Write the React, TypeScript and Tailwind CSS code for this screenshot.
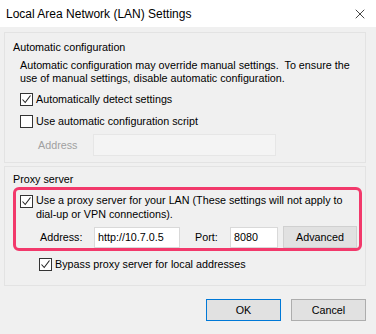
import { X } from 'lucide-react';

function Check({ checked }: { checked?: boolean }) {
  return (
    <span className="w-[13px] h-[13px] border border-[#333] bg-white flex items-center justify-center shrink-0">
      {checked && (
        <svg width="11" height="11" viewBox="0 0 11 11" fill="none">
          <path d="M1.5 5.5 L4.2 8.5 L9.5 1.5" stroke="#222" strokeWidth="1.1" />
        </svg>
      )}
    </span>
  );
}

export default function App() {
  return (
    <div className="w-[376px] h-[334px] bg-[#f0f0f0] text-[10.75px] text-black font-['Liberation_Sans',Arial,sans-serif] leading-[14px] whitespace-nowrap overflow-hidden">
      <div className="h-[27px] bg-white flex items-center justify-between pl-[6px] pr-[8px]">
        <span className="text-[12px]">Local Area Network (LAN) Settings</span>
        <X className="w-[16px] h-[16px]" strokeWidth={1.1} />
      </div>

      <div className="px-[4px] pt-[5px]">
        <div className="border border-[#e3e3e3] w-[362px] h-[131px] pl-[8px] pt-[7px]">
          <p>Automatic configuration</p>
          <div className="pl-[7px] pt-[5px]">
            <p className="leading-[13px]">
              Automatic configuration may override manual settings.&nbsp; To ensure the
              <br />
              use of manual settings, disable automatic configuration.
            </p>
            <label className="flex items-center gap-[3px] mt-[7px]">
              <Check checked />
              <span>Automatically detect settings</span>
            </label>
            <label className="flex items-center gap-[3px] mt-[8px]">
              <Check />
              <span>Use automatic configuration script</span>
            </label>
            <div className="flex items-center mt-[6px]">
              <span className="w-[73px] pl-[18px] text-[#a0a0a0]">Address</span>
              <span className="w-[183px] h-[22px] border border-[#e6e6e6] bg-[#f4f4f4]" />
            </div>
          </div>
        </div>

        <div className="border border-[#e3e3e3] w-[362px] h-[120px] mt-[3px] pl-[8px] pt-[5px]">
          <p>Proxy server</p>
          <div className="mt-[1px] w-[349px] border-[3px] border-[#f2396b] rounded-[6px] pl-[4px] pt-[3px] pb-0">
            <label className="flex items-start gap-[3px]">
              <span className="mt-[2px]"><Check checked /></span>
              <span className="leading-[14px]">
                Use a proxy server for your LAN (These settings will not apply to
                <br />
                dial-up or VPN connections).
              </span>
            </label>
            <div className="flex items-center mt-[5px]">
              <span className="w-[74px] pl-[20px]">Address:</span>
              <span className="w-[86px] h-[21px] border border-[#d9d9d9] bg-white flex items-center pl-[3px]">http://10.7.0.5</span>
              <span className="w-[50px] pl-[15px]">Port:</span>
              <span className="w-[48px] h-[21px] border border-[#d9d9d9] bg-white flex items-center pl-[3px]">8080</span>
              <span className="ml-[5px] w-[74px] h-[22px] border border-[#d0d0d0] bg-[#e1e1e1] flex items-center justify-center">Advanced</span>
            </div>
          </div>
          <label className="flex items-center gap-[3px] mt-[6px] pl-[26px]">
            <Check checked />
            <span>Bypass proxy server for local addresses</span>
          </label>
        </div>
      </div>

      <div className="flex justify-end gap-[10px] pr-[10px] mt-[13px]">
        <button className="w-[75px] h-[22px] border border-[#0078d7] bg-[#e1e1e1]">OK</button>
        <button className="w-[75px] h-[22px] border border-[#adadad] bg-[#e1e1e1]">Cancel</button>
      </div>
    </div>
  );
}
